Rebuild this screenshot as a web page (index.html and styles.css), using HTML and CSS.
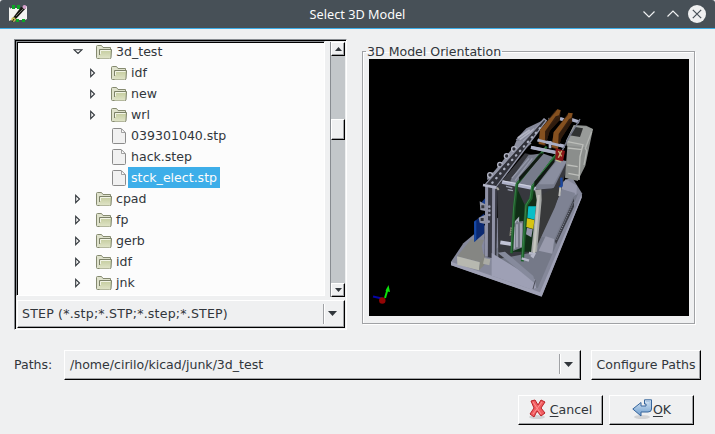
FILE: index.html
```html
<!DOCTYPE html>
<html lang="en">
<head>
<meta charset="utf-8">
<title>Select 3D Model</title>
<link rel="stylesheet" href="styles.css">
</head>
<body>
<svg class="defs" width="0" height="0">
  <defs>
    <linearGradient id="fold" x1="0" y1="0" x2="0" y2="1"><stop offset="0" stop-color="#c3cb9c"/><stop offset="1" stop-color="#e0e4c8"/></linearGradient>
    <linearGradient id="blue" x1="0" y1="0" x2="0" y2="1"><stop offset="0" stop-color="#d8e6f4"/><stop offset="1" stop-color="#6c9ccd"/></linearGradient>
    <symbol id="folder" viewBox="0 0 16 14">
      <path d="M.5 12.5V1.5Q.5.5 1.5.5H5.5L7 2.5H14.500V12.500Q14.500 13.500 13.500 13.500H1.500Q.5 13.500 .5 12.500Z" fill="#dfe2cc" stroke="#858a70"/>
      <path d="M3.500 11V4.500H15.500L15 12.500Q15 13.500 14 13.500H3.500Z" fill="url(#fold)"/>
      <path d="M3.500 10V4.500H15.500L15 12.500Q15 13.500 14 13.500" fill="none" stroke="#7c8168"/>
      <path d="M4.500 9V5.500H14.500" fill="none" stroke="#f2f4e6"/>
    </symbol>
    <symbol id="file" viewBox="0 0 14 16">
      <path d="M1.500.5H9L13.500 5V14.500Q13.500 15.500 12.500 15.500H1.500Q.5 15.500 .5 14.500V1.500Q.5.5 1.500.5Z" fill="#f1f1f1" stroke="#8b8b8b"/>
      <path d="M9.500.8V4.500H13.300Z" fill="#fff" stroke="#8b8b8b" stroke-width=".8"/>
    </symbol>
    <symbol id="closed" viewBox="0 0 6 10"><path d="M.7 1.300V8.700L4.500 5Z" fill="none" stroke="#31363b" stroke-width="1.100"/></symbol>
    <symbol id="open" viewBox="0 0 10 6"><path d="M1.200 .8H8.800L5 4.500Z" fill="none" stroke="#31363b" stroke-width="1.100"/></symbol>
    <symbol id="down" viewBox="0 0 9 5"><path d="M0 0H9L4.500 5Z" fill="#31363b"/></symbol>
  </defs>
</svg>
<div class="window">
  <header class="titlebar">
    <svg class="app" width="18" height="18" viewBox="0 0 18 18">
      <path d="M0 2L2 4V3H16V2L18 1V14L16 15H2L0 16Z" fill="#f4f4f1"/>
      <path d="M3 0H6V4H3ZM8 0H11V4H8ZM7 14H10V17H7ZM13 14H16V17H13Z" fill="#0da526"/>
      <path d="M3 14L12 2L17 3L6 15Z" fill="#171812"/><path d="M7 11L14 4" stroke="#77786e"/>
      <circle cx="15.500" cy="2" r="2" fill="#d5a0cc"/><circle cx="4.500" cy="14.500" r="2.200" fill="#c9ba4f"/><path d="M3 17L5 14" stroke="#222"/>
    </svg>
    <h1 class="title">Select 3D Model</h1>
    <svg class="controls" width="64" height="18" viewBox="0 0 64 18">
      <path d="M1.500 6.500L7 12L12.500 6.500M25.500 11.500L31 6L36.500 11.500" fill="none" stroke="#eff0f1" stroke-width="1.200"/>
      <circle cx="55" cy="9" r="9" fill="#eff0f1"/><path d="M50.800 4.800L59.200 13.200M59.200 4.800L50.800 13.200" stroke="#475057" stroke-width="1.200"/>
    </svg>
  </header>
  <main class="main">
    <section class="browser">
      <div class="listing">
        <ul class="tree">
          <li class="row"><svg class="arrow wide"><use href="#open"/></svg><svg class="folder"><use href="#folder"/></svg><span class="name">3d_test</span></li>
          <li class="row sub"><svg class="arrow"><use href="#closed"/></svg><svg class="folder"><use href="#folder"/></svg><span class="name">idf</span></li>
          <li class="row sub"><svg class="arrow"><use href="#closed"/></svg><svg class="folder"><use href="#folder"/></svg><span class="name">new</span></li>
          <li class="row sub"><svg class="arrow"><use href="#closed"/></svg><svg class="folder"><use href="#folder"/></svg><span class="name">wrl</span></li>
          <li class="row leaf"><svg class="file"><use href="#file"/></svg><span class="name">039301040.stp</span></li>
          <li class="row leaf"><svg class="file"><use href="#file"/></svg><span class="name">hack.step</span></li>
          <li class="row leaf"><svg class="file"><use href="#file"/></svg><span class="name selected">stck_elect.stp</span></li>
          <li class="row"><svg class="arrow"><use href="#closed"/></svg><svg class="folder"><use href="#folder"/></svg><span class="name">cpad</span></li>
          <li class="row"><svg class="arrow"><use href="#closed"/></svg><svg class="folder"><use href="#folder"/></svg><span class="name">fp</span></li>
          <li class="row"><svg class="arrow"><use href="#closed"/></svg><svg class="folder"><use href="#folder"/></svg><span class="name">gerb</span></li>
          <li class="row"><svg class="arrow"><use href="#closed"/></svg><svg class="folder"><use href="#folder"/></svg><span class="name">idf</span></li>
          <li class="row"><svg class="arrow"><use href="#closed"/></svg><svg class="folder"><use href="#folder"/></svg><span class="name">jnk</span></li>
        </ul>
        <div class="scrollbar">
          <div class="bevel step"><svg class="tri flip"><use href="#down"/></svg></div>
          <div class="bevel thumb"></div>
          <div class="bevel step last"><svg class="tri"><use href="#down"/></svg></div>
        </div>
      </div>
      <div class="bevel combo filter"><span class="filter-text">STEP (*.stp;*.STP;*.step;*.STEP)</span><span class="drop"><svg class="caret"><use href="#down"/></svg></span></div>
    </section>
    <fieldset class="preview">
      <legend class="legend">3D Model Orientation</legend>
      <svg class="scene" width="320" height="257" viewBox="369 59 320 257">
        <path d="M369 59H689V316H369Z" fill="#000"/>
        <path d="M373 296.500L382 298.500" stroke="#0505a8" stroke-width="2"/><path d="M385 298L388 288" stroke="#0be00b" stroke-width="2"/><path d="M385.500 291L388.500 285L390 292Z" fill="#0be00b"/><circle cx="382.300" cy="300.500" r="3.200" fill="#940505"/>
        <g transform="translate(445 105) scale(.33333)">
          <path d="M18 470L55 415L120 360L380 215L411 265L410 277L290 574L18 480Z" fill="#85889a"/>
          <path d="M18 470L285 562L410 268V278L290 575L18 481Z" fill="#9fa1b5"/>
          <path d="M140 440L400 265L278 550L142 490Z" fill="#757988"/>
          <path d="M362 222L396 242L394 269L345 250Z" fill="#9799ad"/>
          <path d="M340 250L390 264L328 402L288 395Z" fill="#7e8293"/>
          <path d="M387 280L330 408L333 418L387 305Z" fill="#3a3c44"/><path d="M385 292L334 406" stroke="#858999" stroke-width="3" stroke-dasharray="4 3"/>
          <path d="M36 454L78 403L126 405V450L106 472Z" fill="#858683"/><path d="M36 454L105 472L102 496L37 479Z" fill="#b7b8b0"/><path d="M105 472L118 456V480L102 496Z" fill="#85867e"/>
          <path d="M87 350L118 325V385L88 411Z" fill="#0b2972"/><path d="M87 350L94 345V404L88 411Z" fill="#1648a5"/><path d="M110 292L120 280V300Z" fill="#173d91"/>
          <path d="M212 104L244 70L298 44L238 113Z" fill="#858899"/><path d="M218 99L254 75M224 104L268 72M235 110L280 64" stroke="#b1b3c2" stroke-width="5"/>
          <path d="M215 105L206 126L190 145L170 172L145 202L128 207L126 224L145 222L260 115Z" fill="#8e91a1"/>
          <g fill="#2b2c34" stroke="#b3b5c5" stroke-width="4"><circle cx="135" cy="210" r="7"/><circle cx="165" cy="179" r="7"/><circle cx="185" cy="153" r="7"/><circle cx="207" cy="132" r="7"/></g>
          <path d="M121 240L298 39L306 49L158 243L152 460L119 448Z" fill="#31323a"/>
          <path d="M121 238L297 42L304 47L155 244" fill="none" stroke="#9295a7" stroke-width="4"/>
          <path d="M142 233L294 59" stroke="#aaaebe" stroke-width="7" stroke-linecap="round" stroke-dasharray="1 17" fill="none"/>
          <path d="M157 243L240 145L370 170L346 265L266 442L160 462Z" fill="#37383e"/>
          <path d="M197 224L250 151L292 145L365 170L326 250L268 254L195 238Z" fill="#777b8b"/>
          <path d="M200 220L252 160M210 227L262 160" stroke="#9599aa" stroke-width="4"/><path d="M280 238L338 164L365 168L326 238Z" fill="#8a8e9f"/>
          <path d="M214 245L239 300L230 440L202 440Z" fill="#102e17"/><path d="M263 258L277 262L266 440H232L246 300Z" fill="#112d17"/>
          <path d="M290 270L330 246L345 262L330 306L268 440Z" fill="#38393a"/>
          <path d="M104 289L121 298V318L106 315ZM101 338L121 329V357L104 353Z" fill="#9295a6"/><path d="M109 301H118V310H109ZM107 339H116V348H107Z" fill="#34353c"/><path d="M119 400L110 423L115 446L130 461V400Z" fill="#8588a0"/>
          <path d="M121 236L158 243L154 461L119 455Z" fill="#373842"/><path d="M125 240L124 455M146 242L145 462" stroke="#9092a6" stroke-width="9"/><path d="M114 240L155 248" stroke="#b4b6c9" stroke-width="8"/>
          <g fill="#979aad"><circle cx="133" cy="305" r="4"/><circle cx="133" cy="317" r="4"/><circle cx="133" cy="330" r="4"/><circle cx="131" cy="350" r="4"/></g>
          <path d="M156 248L161 255" stroke="#aaa9a1" stroke-width="6"/>
          <path d="M171 231L272 251" stroke="#aeb1c8" stroke-width="11"/><path d="M174 228L272 247" stroke="#d0d2df" stroke-width="3"/><path d="M183 244L202 249M188 254L204 257" stroke="#9ca0b1" stroke-width="4"/>
          <path d="M166 412L204 418" stroke="#c1c3d5" stroke-width="11"/><path d="M199 368L196 393" stroke="#c4c1a1" stroke-width="6" stroke-dasharray="3 3"/>
          <path d="M205 352L235 348V426L204 438Z" fill="#767a88"/><path d="M208 365V431M216 358V427M228 355V427M208 354L220 341V352" fill="none" stroke="#a9acbb" stroke-width="5"/>
          <path d="M305 125L216 237L208 306L200 445" fill="none" stroke="#1c5526" stroke-width="8"/><path d="M303 125L214 236L206 306L198 444" fill="none" stroke="#348044" stroke-width="3"/>
          <path d="M335 148L263 245L258 280L244 300L232 469" fill="none" stroke="#1c602a" stroke-width="9"/><path d="M331 149L260 245L255 280L243 300L231 465" fill="none" stroke="#39844a" stroke-width="3"/>
          <path d="M222 217L287 145L296 146L223 230ZM268 230L329 160V171L268 249Z" fill="#111913"/>
          <path d="M250 304L273 304L269 344L247 338Z" fill="#0abec7"/><path d="M246 340L268 345L265 372L244 366Z" fill="#d6c413"/><path d="M246 368L263 373L259 397L243 388Z" fill="#9698ad"/>
          <path d="M270 255L289 253L290 285L276 440L258 443L275 285Z" fill="#a5a7a5"/><path d="M281 270L267 444" stroke="#c4c5bf" stroke-width="7"/><path d="M252 444L268 447L264 455L258 450M230 460L252 467" fill="none" stroke="#b6b8c8" stroke-width="7"/>
          <path d="M302 394L328 402L322 446L281 437Z" fill="#999bad"/>
          <path d="M140 444L270 524L273 548L262 554L140 512Z" fill="#9ea0b5"/><path d="M158 443L180 440L265 513L271 536Z" fill="#868a9c"/><path d="M271 526L264 552" stroke="#4b4d58" stroke-width="3"/>
          <path d="M118 459L136 463L133 481L114 476Z" fill="#aaaba4"/>
          <path d="M386 60L424 62L444 72L421 182L398 228L360 218L367 125L364 108Z" fill="#8b8e8c"/><path d="M386 62L424 65L444 73L422 127L365 122L363 107Z" fill="#989b99"/><path d="M391 66L414 70L405 96L373 91Z" fill="#303232"/><path d="M367 110L414 119L405 155L402 225M368 129L412 134M370 205L402 211M367 180L398 185" fill="none" stroke="#bdbfbb" stroke-width="4"/><path d="M440 80L421 130L425 137L417 180" fill="none" stroke="#b1b4b1" stroke-width="4"/>
          <path d="M278 105L360 124M258 127L340 144M310 43L326 47M345 41L365 47M380 44L403 51" stroke="#aaaec5" stroke-width="10"/><path d="M405 42L370 100L352 136" fill="none" stroke="#74788a" stroke-width="4"/>
          <path d="M285 75L330 18L337 13L347 15L344 46L314 78L301 123L281 118Z" fill="#382111"/><path d="M285 74L331 22L337 13L347 16L342 31L332 34L301 78L299 120L281 116Z" fill="#85501f"/><path d="M301 79L336 40L344 42L314 78L301 120Z" fill="#301c0e"/>
          <path d="M326 82L370 24L383 24L381 51L349 100L338 135L319 128Z" fill="#382111"/><path d="M326 82L368 31L370 23L383 25L379 39L372 42L341 87L339 132L320 126Z" fill="#85501f"/><path d="M342 88L373 49L379 51L349 100L341 128Z" fill="#301c0e"/>
          <path d="M278 105L355 124M315 108V130M258 127L340 144" stroke="#aaaec5" stroke-width="8"/>
          <path d="M332 129L360 138L354 169L331 164Z" fill="#8b1719"/><path d="M340 138L350 154M350 137L340 158" stroke="#c4b478" stroke-width="4"/><path d="M332 165L348 171" stroke="#c5c08e" stroke-width="4"/>
          <path d="M349 218L350 242L343 247" fill="none" stroke="#1d48a1" stroke-width="7"/><path d="M346 247L343 273" stroke="#bcbdba" stroke-width="6"/>
        </g>
      </svg>
    </fieldset>
  </main>
  <div class="paths">
    <span class="paths-label">Paths:</span>
    <div class="bevel combo path"><span class="path-text">/home/cirilo/kicad/junk/3d_test</span><span class="drop"><svg class="caret"><use href="#down"/></svg></span></div>
    <button class="bevel button configure"><span class="configure-text">Configure Paths</span></button>
  </div>
  <footer class="actions">
    <button class="bevel button cancel">
      <svg width="18" height="20" viewBox="0 0 18 20"><ellipse cx="8" cy="18" rx="8" ry="2" fill="#d2d3d5"/><path d="M2 2L6 1L9 6L12 1L16 3L12 9L16 14L12 17L8 12L5 18L1 15L5 9Z" fill="#f15d61" stroke="#b92328" stroke-linejoin="round"/><path d="M4 3L12 15M13 3L4 15" stroke="#ff9292"/></svg>
      <span><u>C</u>ancel</span>
    </button>
    <button class="bevel button ok">
      <svg width="21" height="20" viewBox="0 0 21 20"><ellipse cx="10" cy="18" rx="8" ry="2" fill="#d2d3d5"/><path d="M.8 10L9 3.500V7H14V5H12.500V.8H19.500V10Q19.500 13 16 13H9V17Z" fill="url(#blue)" stroke="#36659c"/><path d="M14 2.500H18V6" fill="none" stroke="#a9c6e4"/></svg>
      <span><u>O</u>K</span>
    </button>
  </footer>
</div>
</body>
</html>
```
FILE: styles.css
```css
* { box-sizing: border-box; }
body { margin: 0; font: 12.55px/21px "DejaVu Sans", sans-serif; color: #31363b; background: #eff0f1; }
svg { display: block; flex: none; }
.defs { position: absolute; }
.window { width: 715px; height: 434px; overflow: hidden; background: #eff0f1; }
.titlebar { height: 29px; background: #475057; border-bottom: 1px solid #3daee9; display: flex; align-items: center; justify-content: space-between; padding: 0 9px; border-radius: 3px 3px 0 0; }
.app { margin-right: 46px; }
.title { margin: 0; font: 12.7px/28px "Noto Sans", sans-serif; color: #fcfcfc; }
.bevel { border: 1px solid #fff; border-right-color: #000; border-bottom-color: #000; box-shadow: inset -1px -1px #a0a2a5; background: #eff0f1; }
.main { display: flex; align-items: flex-start; padding: 10px 0 0 14px; gap: 15px; }
.browser { width: 333px; height: 291px; border: solid; border-width: 1px; border-color: #888c91 #fff #fff #888c91; box-shadow: inset 1px 1px #000; padding: 2px 1px 1px 2px; }
.listing { height: 257px; display: flex; justify-content: space-between; }
.tree { width: 309px; height: 255px; margin: -1px 0 0 -1px; padding: 0 0 0 55px; list-style: none; background: #fcfcfc; border: solid; border-width: 1px; border-color: #888c91 #fff #fff #888c91; box-shadow: inset 1px 1px #000; overflow: hidden; }
.row { height: 21px; display: flex; align-items: center; position: relative; top: -1px; }
.arrow { width: 6px; height: 10px; margin: 0 15px 0 3px; }
.arrow.wide { width: 10px; height: 6px; margin: 0 13px 0 1px; }
.folder { width: 16px; height: 14px; margin-right: 1px; }
.sub { padding-left: 15px; }
.leaf { padding-left: 40px; }
.file { width: 14px; height: 16px; margin-right: 2px; }
.name { padding: 0 3px; height: 21px; }
.selected { background: #3daee9; color: #fcfcfc; }
.scrollbar { width: 15px; height: 255px; background: #c3c7ca; border-left: 1px solid #888c91; display: flex; flex-direction: column; }
.step { height: 14px; display: flex; align-items: center; justify-content: center; }
.thumb { height: 21px; margin-top: 63px; }
.last { margin-top: auto; }
.tri { width: 7px; height: 4px; }
.flip { transform: scaleY(-1); }
.combo { display: flex; align-items: center; justify-content: space-between; }
.filter { height: 28px; margin-top: 1px; padding: 0 7px 1px 4px; }
.filter-text { letter-spacing: 0.2px; }
.drop { height: 20px; border-left: 1px solid #a0a2a5; box-shadow: inset 1px 0 #fff; padding-left: 4px; display: flex; align-items: center; }
.caret { width: 9px; height: 5px; }
.preview { width: 333px; height: 280px; margin: 5px 0 0; padding: 0 5px 0 6px; min-width: 0; border: 1px solid #a0a2a5; box-shadow: 1px 1px #fff, inset 1px 1px #fff; }
.legend { padding: 0 1px; margin-left: -3px; height: 15px; line-height: 15px; }
.scene { margin: 0; }
.paths { display: flex; align-items: center; padding: 0 14px; margin-top: 20px; }
.paths-label { width: 50px; padding-bottom: 2px; }
.path { width: 517px; height: 30px; padding: 0 7px 2px 5px; }
.button { font: inherit; color: inherit; padding: 0 0 2px; height: 30px; border-radius: 0; display: flex; align-items: center; justify-content: center; }
.configure { width: 110px; margin-left: 10px; }
.actions { display: flex; justify-content: flex-end; gap: 6px; padding: 15px 21px 0 0; }
.cancel, .ok { width: 85px; }
.cancel { gap: 3px; }
u { text-underline-offset: 2px; }
```
